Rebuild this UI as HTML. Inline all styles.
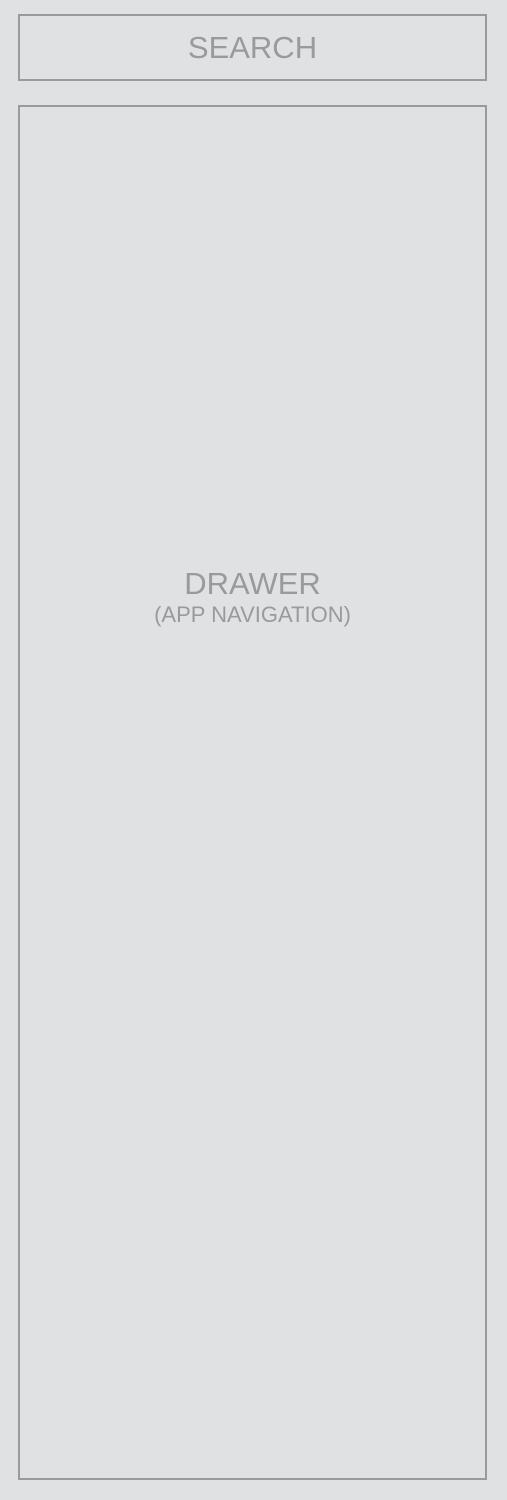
<!DOCTYPE html>
<html><head><style>
html,body{margin:0;padding:0;width:507px;height:1500px;background:#e0e1e3;overflow:hidden}
.box{position:absolute;border:2px solid #9a9a9a;box-sizing:border-box;color:#9a9a9a;font-family:"Liberation Sans",sans-serif;text-align:center}
#s{left:18px;top:14px;width:469px;height:67px;font-size:31px;line-height:63px}
#d{left:18px;top:105px;width:469px;height:1375px}
#t{position:absolute;left:0;right:0;top:460px;font-size:31px;line-height:34px}
#t2{position:absolute;left:0;right:0;top:496px;font-size:22px;line-height:24px}
</style></head><body>
<div class="box" id="s">SEARCH</div>
<div class="box" id="d"><div id="t">DRAWER</div><div id="t2">(APP NAVIGATION)</div></div>
</body></html>
